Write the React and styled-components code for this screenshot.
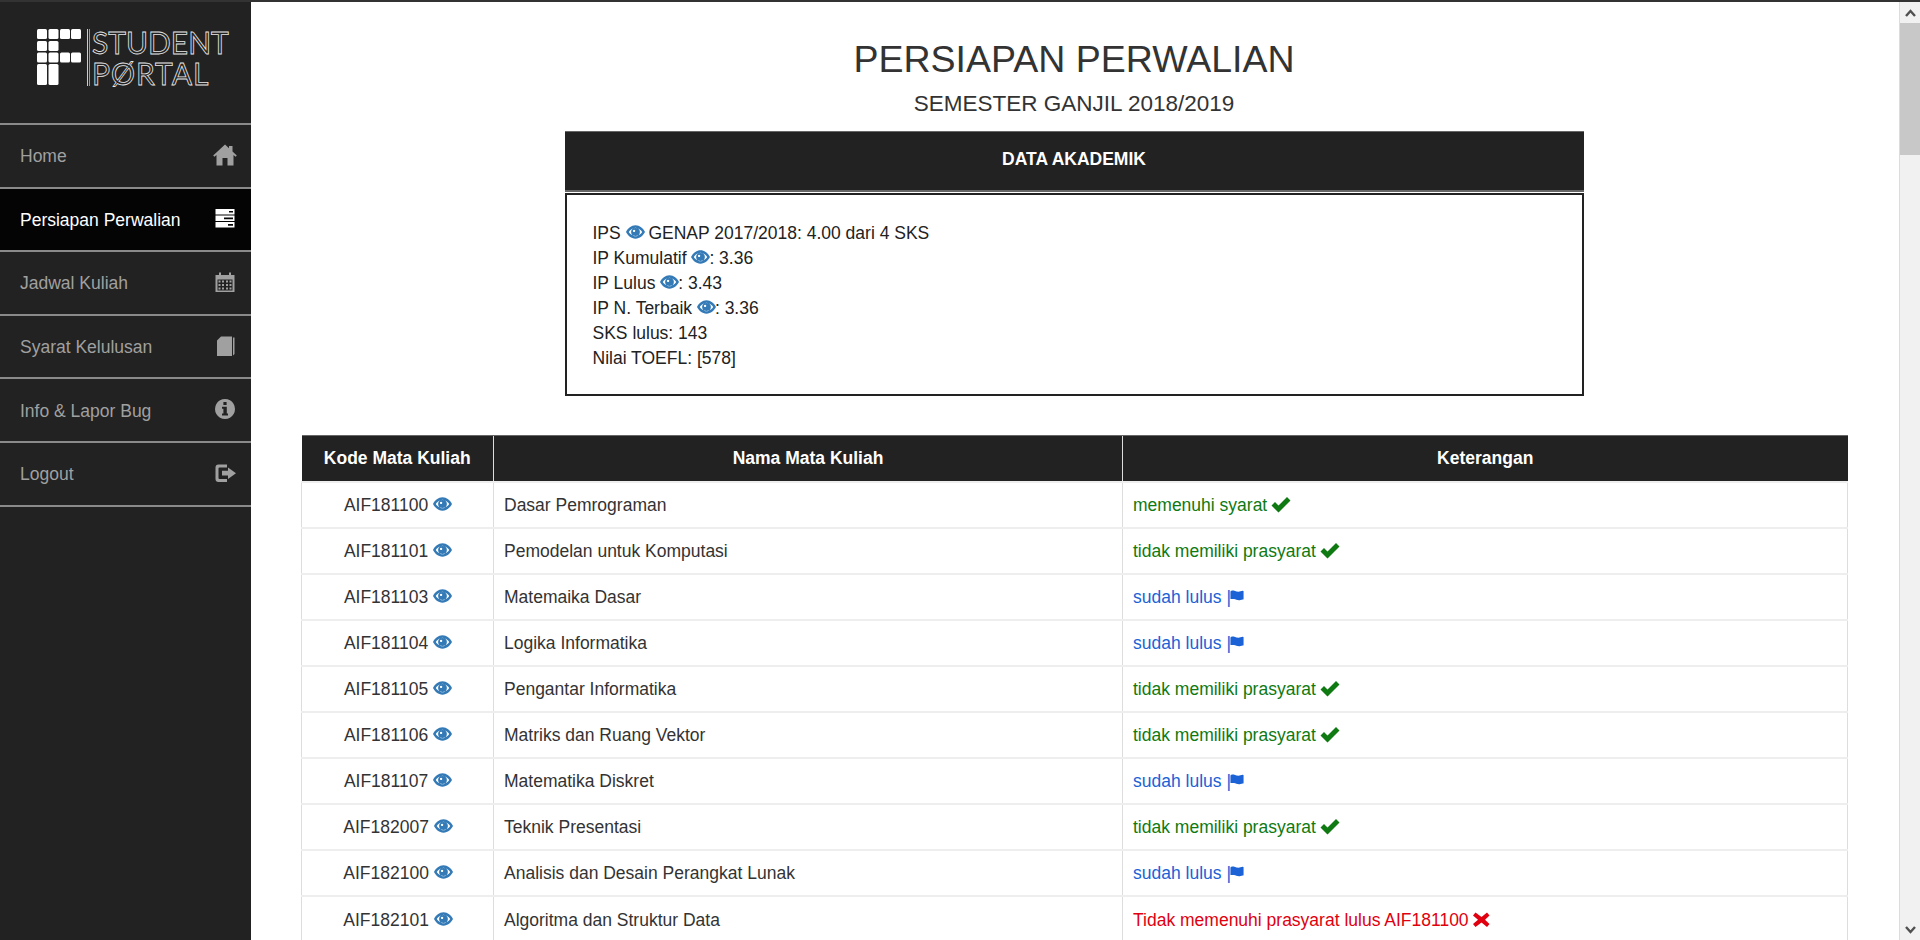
import React from 'react';
import styled, { createGlobalStyle } from 'styled-components';

const Global = createGlobalStyle`
  html, body { margin: 0; padding: 0; height: 100%; overflow: hidden; background: #fff; }
  body { font-family: "Liberation Sans", Arial, sans-serif; color: #333; }
  * { box-sizing: border-box; }
`;

const Page = styled.div`
  height: 940px;
  display: flex;
  flex-direction: column;
  overflow: hidden;
  border-top: 2px solid #333;
`;

const Body = styled.div`
  flex: 1;
  min-height: 0;
  display: flex;
`;

const Sidebar = styled.aside`
  width: 251px;
  flex: none;
  background: #222;
`;

const LogoWrap = styled.div`
  height: 123px;
  display: flex;
  padding: 27px 0 0 37px;
  border-bottom: 2px solid #8a8a8a;
`;

const LogoMark = styled.svg`
  width: 44px;
  height: 56px;
  flex: none;
`;

const LogoDivider = styled.div`
  width: 3px;
  height: 57px;
  margin: 0 2px 0 6px;
  border-left: 1px solid #ccc;
  border-right: 1px solid #999;
`;

const LogoText = styled.div`
  font-family: "Lato", "Liberation Sans", sans-serif;
  font-weight: 400;
  font-size: 30px;
  line-height: 28px;
  margin-top: ${p => p.$top}px;
  color: transparent;
  -webkit-text-stroke: 0.8px #e8e8e8;
  white-space: nowrap;
  letter-spacing: ${p => p.$spacing}px;
`;

const NavItem = styled.div`
  height: 63.6px;
  display: flex;
  align-items: center;
  justify-content: space-between;
  padding: 2px 14px 0 20px;
  border-bottom: 2px solid #8a8a8a;
  font-size: 17.5px;
  background: ${p => (p.$active ? '#040404' : 'transparent')};
  color: ${p => (p.$active ? '#fff' : '#a0a0a0')};
`;

const NavGlyph = styled.svg`
  width: 24px;
  height: 24px;
  flex: none;
  margin-top: -4px;
  fill: currentColor;
`;

const Main = styled.main`
  flex: 1;
  min-width: 0;
  padding: 37px 52px 0 50px;
  overflow: hidden;
`;

const Title = styled.h1`
  margin: 0;
  font-size: 37.5px;
  font-weight: 400;
  line-height: 40px;
  text-align: center;
`;

const Subtitle = styled.h2`
  margin: 10px 0 12px;
  font-size: 22.5px;
  font-weight: 400;
  line-height: 30px;
  text-align: center;
`;

const Panel = styled.section`
  width: 1019px;
  margin: 0 auto;
`;

const PanelHead = styled.div`
  height: 61px;
  background: #222;
  border-top: 1px solid #666;
  border-bottom: 2px solid #666;
  color: #fff;
  font-weight: 700;
  font-size: 17.5px;
  text-align: center;
  padding-top: 16px;
  line-height: 22px;
`;

const PanelBox = styled.div`
  margin-top: 1px;
  border: 2px solid #222;
  padding: 26px 26px 23px;
  font-size: 17.5px;
  line-height: 25px;
  color: #222;
`;

const Line = styled.div`
  white-space: nowrap;
`;

const Eye = styled.svg`
  width: 19px;
  height: 14px;
  margin-right: -1px;
  fill: #337ab7;
  vertical-align: 0;
`;

const Table = styled.table`
  width: 1546px;
  margin-top: 39px;
  border-collapse: collapse;
  table-layout: fixed;
  font-size: 17.5px;
`;

const HeadCell = styled.th`
  height: 46px;
  background: #222;
  color: #fff;
  font-weight: 700;
  text-align: center;
  padding: 0 10px;
  border-left: 1px solid #ddd;
  border-top: 1px solid #666;
  &:first-child { border-left: 0; }
`;

const Cell = styled.td`
  height: 46px;
  padding: 2px 10px 0;
  border: 1px solid #ddd;
  border-top: 2px solid #eee;
  border-bottom: 0;
  text-align: ${p => (p.$center ? 'center' : 'left')};
  white-space: nowrap;
`;

const Note = styled.span`
  color: ${p => ({ ok: '#0f7a12', done: '#1a62d6', bad: '#e0000f' })[p.$kind]};
`;

const StatusGlyph = styled.svg`
  width: 20px;
  height: 17px;
  margin-left: -1px;
  fill: currentColor;
  vertical-align: -2px;
`;

const FlagGlyph = styled.svg`
  width: 14px;
  height: 14px;
  margin-left: -1px;
  fill: currentColor;
  vertical-align: 0;
`;

const Scrollbar = styled.div`
  width: 21px;
  flex: none;
  background: #f1f1f1;
  border-left: 1px solid #dcdcdc;
  display: flex;
  flex-direction: column;
`;

const ScrollButton = styled.div`
  height: 21px;
  flex: none;
  display: flex;
  align-items: center;
  justify-content: center;
  background: #f1f1f1;
`;

const ScrollArrow = styled.svg`
  width: 11px;
  height: 8px;
  fill: none;
  stroke: #505050;
  stroke-width: 2.4;
`;

const ScrollTrack = styled.div`
  flex: 1;
`;

const ScrollThumb = styled.div`
  height: 132px;
  background: #c8c8c8;
`;

const navIcons = {
  home: (
    <path
      fillRule="evenodd"
      d="M12 1.5 L16 5.2 V3 H19.5 V8.4 L23.8 12.5 L22.6 13.8 L20.5 12 V22.5 H3.5 V12 L1.4 13.8 L0.2 12.5 Z M9.5 15 V22.5 H14.5 V15 Z"
    />
  ),
  server: (
    <path
      fillRule="evenodd"
      d="M2.5 3 H21.5 V8.6 H2.5 Z M16 5 V6.6 H20 V5 Z M2.5 9.6 H21.5 V15 H2.5 Z M11 11.4 V13.2 H20 V11.4 Z M2.5 16 H21.5 V21.5 H2.5 Z M15 18 V19.8 H20 V18 Z"
    />
  ),
  calendar: (
    <path
      fillRule="evenodd"
      d="M6 2.5 H8 V5 H16 V2.5 H18 V5 H21.5 V22 H2.5 V5 H6 Z M4.5 9.5 V20.5 H19.5 V9.5 Z M5.5 10.5 H7.5 V12.5 H5.5 Z M9 10.5 H11 V12.5 H9 Z M13 10.5 H15 V12.5 H13 Z M16.5 10.5 H18.5 V12.5 H16.5 Z M5.5 14 H7.5 V16 H5.5 Z M9 14 H11 V16 H9 Z M13 14 H15 V16 H13 Z M16.5 14 H18.5 V16 H16.5 Z M5.5 17.5 H7.5 V19.5 H5.5 Z M9 17.5 H11 V19.5 H9 Z M13 17.5 H15 V19.5 H13 Z M16.5 17.5 H18.5 V19.5 H16.5 Z"
    />
  ),
  book: (
    <path d="M8 2.5 H19 V22 H4 V6.5 Z M20 3.5 H21.5 V20 L20 21.5 Z" />
  ),
  info: (
    <path
      fillRule="evenodd"
      d="M12 2 A10 10 0 1 0 12.01 2 Z M10.4 5 H13.6 V8 H10.4 Z M9 9.8 H13.8 V16.5 H15 V18.6 H9 V16.5 H10.4 V11.8 H9 Z"
    />
  ),
  logout: (
    <path d="M5.5 3.5 H14 V6.5 H6.5 Q5.5 6.5 5.5 7.5 V17 Q5.5 18 6.5 18 H14 V21 H5.5 Q2.5 21 2.5 18 V6.5 Q2.5 3.5 5.5 3.5 Z M9 9.8 H15 V6.4 L23 12.2 L15 18 V14.6 H9 Z" />
  ),
};

const EyeIcon = () => (
  <Eye viewBox="0 0 20 14">
    <path
      fillRule="evenodd"
      d="M10 0 C14.5 0 18 3.2 20 7 C18 10.8 14.5 14 10 14 C5.5 14 2 10.8 0 7 C2 3.2 5.5 0 10 0 Z M10 2.9 C6.9 2.9 4.2 4.9 2.9 7 C4.2 9.1 6.9 11.1 10 11.1 C13.1 11.1 15.8 9.1 17.1 7 C15.8 4.9 13.1 2.9 10 2.9 Z M10 2.4 A4.6 4.6 0 1 1 9.99 2.4 Z M8.5 4.6 A1.2 1.2 0 1 0 8.51 4.6 Z"
    />
  </Eye>
);

const statusPaths = {
  check: 'M0.5 9.5 L4 6 L7.5 9.5 L16 1 L19.5 4.5 L7.5 16.5 Z',
  cross: 'M3.5 1.5 L9.5 6 L15 1.5 L17.5 4.5 L13 8.7 L17.5 13 L15 16 L9.5 11.5 L3.5 16 L1 13 L6 8.7 L1 4.5 Z',
};

const rows = [
  ['AIF181100', 'Dasar Pemrograman', 'ok', 'memenuhi syarat'],
  ['AIF181101', 'Pemodelan untuk Komputasi', 'ok', 'tidak memiliki prasyarat'],
  ['AIF181103', 'Matemaika Dasar', 'done', 'sudah lulus'],
  ['AIF181104', 'Logika Informatika', 'done', 'sudah lulus'],
  ['AIF181105', 'Pengantar Informatika', 'ok', 'tidak memiliki prasyarat'],
  ['AIF181106', 'Matriks dan Ruang Vektor', 'ok', 'tidak memiliki prasyarat'],
  ['AIF181107', 'Matematika Diskret', 'done', 'sudah lulus'],
  ['AIF182007', 'Teknik Presentasi', 'ok', 'tidak memiliki prasyarat'],
  ['AIF182100', 'Analisis dan Desain Perangkat Lunak', 'done', 'sudah lulus'],
  ['AIF182101', 'Algoritma dan Struktur Data', 'bad', 'Tidak memenuhi prasyarat lulus AIF181100'],
];

const nav = [
  ['Home', 'home'],
  ['Persiapan Perwalian', 'server', true],
  ['Jadwal Kuliah', 'calendar'],
  ['Syarat Kelulusan', 'book'],
  ['Info & Lapor Bug', 'info'],
  ['Logout', 'logout'],
];

const logoCells = [
  [0, 0, 10, 10], [11.5, 0, 10, 10], [23, 0, 10, 10], [34, 0, 10, 10],
  [0, 12, 10, 10], [11.5, 12, 10, 10],
  [0, 23.5, 10, 10], [11.5, 23.5, 10, 10], [23, 23.5, 10, 10], [34, 23.5, 10, 10],
  [0, 35, 10, 21], [11.5, 35, 10, 21],
];

function Status({ kind, text }) {
  if (kind === 'done') {
    return (
      <Note $kind={kind}>
        {text} |<FlagGlyph viewBox="0 0 16 16"><path d="M0.5 3 C1 2 3 1.5 5 2 C8 3 10 3.5 12 2.5 C13.5 1.8 15.5 1.5 15.5 2.5 V11.5 C15.5 12.5 14 12 12 12.5 C9.5 13.5 7 12 4.5 11.5 C3 11.2 0.5 12 0.5 11 Z" /></FlagGlyph>
      </Note>
    );
  }
  return (
    <Note $kind={kind}>
      {text} <StatusGlyph viewBox="0 0 20 17"><path d={kind === 'ok' ? statusPaths.check : statusPaths.cross} /></StatusGlyph>
    </Note>
  );
}

export default function App() {
  return (
    <Page>
      <Global />
      <Body>
        <Sidebar>
          <LogoWrap>
            <LogoMark viewBox="0 0 44 56">
              {logoCells.map(([x, y, w, h]) => (
                <rect key={`${x}-${y}`} x={x} y={y} width={w} height={h} rx="1.5" fill="#fff" />
              ))}
            </LogoMark>
            <LogoDivider />
            <div>
              <LogoText $spacing={0} $top={-1.5}>STUDENT</LogoText>
              <LogoText $spacing={1} $top={3}>PØRTAL</LogoText>
            </div>
          </LogoWrap>
          {nav.map(([label, icon, active]) => (
            <NavItem key={label} $active={active}>
              {label}
              <NavGlyph viewBox="0 0 24 24">{navIcons[icon]}</NavGlyph>
            </NavItem>
          ))}
        </Sidebar>
        <Main>
          <Title>PERSIAPAN PERWALIAN</Title>
          <Subtitle>SEMESTER GANJIL 2018/2019</Subtitle>
          <Panel>
            <PanelHead>DATA AKADEMIK</PanelHead>
            <PanelBox>
              <Line>IPS <EyeIcon /> GENAP 2017/2018: 4.00 dari 4 SKS</Line>
              <Line>IP Kumulatif <EyeIcon />: 3.36</Line>
              <Line>IP Lulus <EyeIcon />: 3.43</Line>
              <Line>IP N. Terbaik <EyeIcon />: 3.36</Line>
              <Line>SKS lulus: 143</Line>
              <Line>Nilai TOEFL: [578]</Line>
            </PanelBox>
          </Panel>
          <Table>
            <colgroup>
              <col width="192" />
              <col width="629" />
              <col width="725" />
            </colgroup>
            <thead>
              <tr>
                <HeadCell>Kode Mata Kuliah</HeadCell>
                <HeadCell>Nama Mata Kuliah</HeadCell>
                <HeadCell>Keterangan</HeadCell>
              </tr>
            </thead>
            <tbody>
              {rows.map(([code, name, kind, text]) => (
                <tr key={code}>
                  <Cell $center>{code} <EyeIcon /></Cell>
                  <Cell>{name}</Cell>
                  <Cell><Status kind={kind} text={text} /></Cell>
                </tr>
              ))}
            </tbody>
          </Table>
        </Main>
        <Scrollbar>
          <ScrollButton>
            <ScrollArrow viewBox="0 0 11 8"><path d="M1 7 L5.5 2 L10 7" /></ScrollArrow>
          </ScrollButton>
          <ScrollThumb />
          <ScrollTrack />
          <ScrollButton>
            <ScrollArrow viewBox="0 0 11 8"><path d="M1 1 L5.5 6 L10 1" /></ScrollArrow>
          </ScrollButton>
        </Scrollbar>
      </Body>
    </Page>
  );
}
